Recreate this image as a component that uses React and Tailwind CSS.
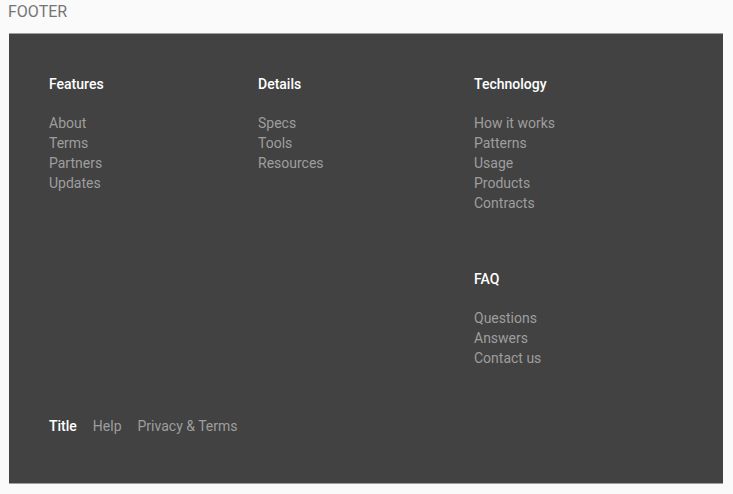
import React from 'react';

const sections = [
    { title: 'Features', links: ['About', 'Terms', 'Partners', 'Updates'] },
    { title: 'Details', links: ['Specs', 'Tools', 'Resources'] },
];

const rightSections = [
    { title: 'Technology', links: ['How it works', 'Patterns', 'Usage', 'Products', 'Contracts'] },
    { title: 'FAQ', links: ['Questions', 'Answers', 'Contact us'] },
];

function Section({ title, links, className = '' }) {
    return (
        <div className={className}>
            <h3 className="text-[14px] leading-6 font-medium text-white">{title}</h3>
            <ul className="mt-[17px]">
                {links.map((link) => (
                    <li key={link} className="text-[14px] leading-5">
                        <a href="#" className="text-[#9e9e9e]">
                            {link}
                        </a>
                    </li>
                ))}
            </ul>
        </div>
    );
}

export default function App() {
    return (
        <div className="min-h-screen bg-[#fafafa] font-['Roboto',sans-serif]">
            <div className="pl-[8px] text-[16px] leading-6 text-[#757575]">FOOTER</div>

            <footer className="mt-[9px] ml-[9px] mr-[10px] h-[451px] border-y border-[#9e9e9e] bg-[#424242] pl-[40px] pt-[38px]">
                <div className="grid grid-cols-[209px_216px_1fr]">
                    {sections.map((s) => (
                        <Section key={s.title} title={s.title} links={s.links} />
                    ))}
                    <div className="flex flex-col gap-[54px]">
                        {rightSections.map((s) => (
                            <Section key={s.title} title={s.title} links={s.links} />
                        ))}
                    </div>
                </div>

                <div className="mt-[46px] flex gap-4 text-[14px] leading-6">
                    <span className="font-medium text-white">Title</span>
                    <a href="#" className="text-[#9e9e9e]">Help</a>
                    <a href="#" className="text-[#9e9e9e]">Privacy &amp; Terms</a>
                </div>
            </footer>
        </div>
    );
}
